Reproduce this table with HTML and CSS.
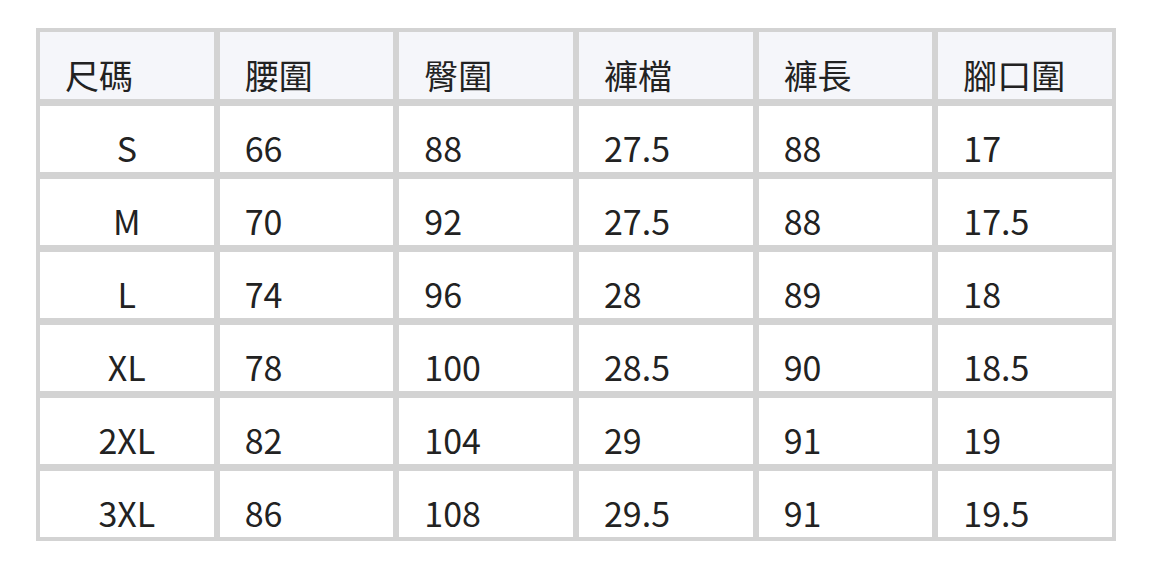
FILE: index.html
```html
<!DOCTYPE html>
<html lang="zh-Hant">
<head>
<meta charset="utf-8">
<link rel="stylesheet" href="styles.css">
</head>
<body>
<table class="size-table">
  <thead>
    <tr>
      <th>尺碼</th><th>腰圍</th><th>臀圍</th><th>褲檔</th><th>褲長</th><th>腳口圍</th>
    </tr>
  </thead>
  <tbody>
    <tr><td class="size">S</td><td>66</td><td>88</td><td>27.5</td><td>88</td><td>17</td></tr>
    <tr><td class="size">M</td><td>70</td><td>92</td><td>27.5</td><td>88</td><td>17.5</td></tr>
    <tr><td class="size">L</td><td>74</td><td>96</td><td>28</td><td>89</td><td>18</td></tr>
    <tr><td class="size">XL</td><td>78</td><td>100</td><td>28.5</td><td>90</td><td>18.5</td></tr>
    <tr><td class="size">2XL</td><td>82</td><td>104</td><td>29</td><td>91</td><td>19</td></tr>
    <tr><td class="size">3XL</td><td>86</td><td>108</td><td>29.5</td><td>91</td><td>19.5</td></tr>
  </tbody>
</table>
</body>
</html>
```

FILE: styles.css
```css
html, body {
  margin: 0;
  padding: 0;
  background: #ffffff;
}
body {
  padding: 28px 0 0 36px;
  font-family: "Noto Sans CJK TC", "Noto Sans", sans-serif;
  color: #222222;
}
.size-table {
  width: 1080px;
  table-layout: fixed;
  border-collapse: separate;
  border-spacing: 0;
  border: 1px solid #d3d3d3;
  border-top: 0;
}
.size-table th,
.size-table td {
  border: 3px solid #d3d3d3;
  border-top-width: 4px;
  font-size: 34px;
  font-weight: 400;
  line-height: 40px;
  text-align: left;
  vertical-align: bottom;
  padding: 0 10px 4px 25px;
}
.size-table th {
  height: 63px;
  background: #f5f6fa;
}
.size-table td {
  height: 62px;
}
.size-table td.size {
  text-align: center;
  padding-left: 10px;
}
```
